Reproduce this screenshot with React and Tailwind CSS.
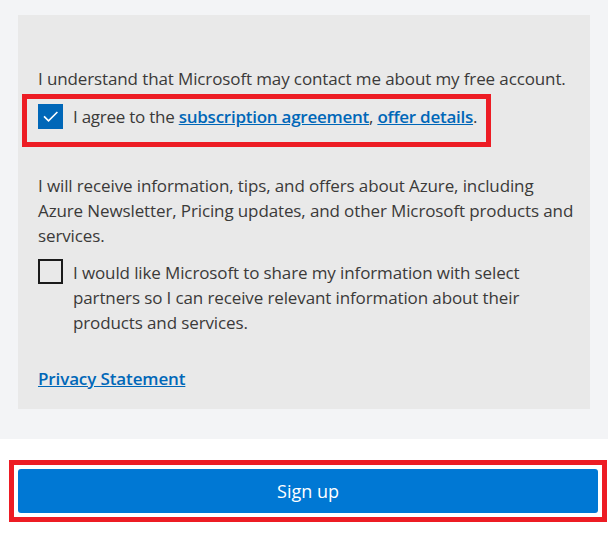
import React, { useState } from "react";

function Checkbox({ checked, onChange }) {
  return (
    <button
      type="button"
      onClick={onChange}
      className={
        checked
          ? "w-[25px] h-[25px] shrink-0 bg-[#0067b8] flex items-center justify-center"
          : "w-[25px] h-[25px] shrink-0 border-2 border-[#1b1b1b] bg-transparent"
      }
      aria-checked={checked}
      role="checkbox"
    >
      {checked && (
        <svg className="w-[19px] h-[19px]" viewBox="0 0 24 24" fill="none">
          <path
            d="M4.5 12.5l5 5L20 7"
            stroke="#fff"
            strokeWidth={2}
            strokeLinecap="square"
          />
        </svg>
      )}
    </button>
  );
}

export default function App() {
  const [agree, setAgree] = useState(true);
  const [share, setShare] = useState(false);

  return (
    <div
      className="w-[615px] h-[533px] bg-white text-[#3b3a39] text-[17px] leading-[25px] tracking-[-0.12px]"
      style={{ fontFamily: '"Open Sans", "Noto Sans", sans-serif' }}
    >
      {/* Consent panel */}
      <div className="w-[608px] bg-[#f3f4f6] pt-[15px] pb-[30px]">
        <div className="mx-[18px] bg-[#e9e9e9] pt-[51px] pb-[18px] pl-[20px] pr-[10px]">
          <p>I understand that Microsoft may contact me about my free account.</p>

          <div className="relative mt-[13px] flex items-start gap-[10px]">
            <div className="absolute -left-[16px] -top-[10px] w-[469px] h-[53px] border-[5px] border-[#ed1c24] pointer-events-none" />
            <Checkbox checked={agree} onChange={() => setAgree(!agree)} />
            <p className="tracking-[-0.25px]">
              I agree to the{" "}
              <a href="#" className="text-[#0067b8] font-semibold underline">
                subscription agreement
              </a>
              ,{" "}
              <a href="#" className="text-[#0067b8] font-semibold underline">
                offer details
              </a>
              .
            </p>
          </div>

          <p className="mt-[44px]">
            I will receive information, tips, and offers about Azure, including
            Azure Newsletter, Pricing updates, and other Microsoft products and
            services.
          </p>

          <div className="mt-[11px] flex items-start gap-[10px]">
            <Checkbox checked={share} onChange={() => setShare(!share)} />
            <p className="pt-[1px] w-[460px]">
              I would like Microsoft to share my information with select
              partners so I can receive relevant information about their
              products and services.
            </p>
          </div>

          <a
            href="#"
            className="block mt-[31px] w-fit text-[#0067b8] font-semibold underline"
          >
            Privacy Statement
          </a>
        </div>
      </div>

      {/* Sign up */}
      <div className="mt-[21px] ml-[9px] w-[598px] border-[5px] border-[#ed1c24] p-[4px]">
        <button
          type="button"
          className="w-full h-[44px] rounded-[3px] bg-[#0078d4] text-white text-[18px] tracking-normal"
        >
          Sign up
        </button>
      </div>
    </div>
  );
}
